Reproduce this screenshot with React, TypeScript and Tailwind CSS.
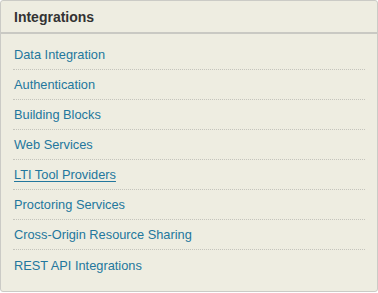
import React from "react";

const links = [
  "Data Integration",
  "Authentication",
  "Building Blocks",
  "Web Services",
  "LTI Tool Providers",
  "Proctoring Services",
  "Cross-Origin Resource Sharing",
  "REST API Integrations",
];

export default function App() {
  return (
    <div className="w-[378px] h-[293px] bg-white font-['Liberation_Sans',Arial,sans-serif]">
      <div className="h-[292px] border border-[#cbcbc6] rounded-[3px] bg-[#eeede1] flex flex-col">
        {/* Header */}
        <div className="h-[33px] border-b-2 border-[#c9c9c3] px-[13px] flex items-center">
          <h2 className="text-[14px] font-bold text-[#333333] leading-none pt-[1px]">Integrations</h2>
        </div>

        {/* Links */}
        <ul className="px-[12px] pt-[6px]">
          {links.map((label, i) => (
            <li
              key={label}
              className={
                i < links.length - 1
                  ? "h-[30px] border-b border-dotted border-[#c4c4bc] flex items-center px-[1px]"
                  : "h-[30px] flex items-center px-[1px]"
              }
            >
              <a
                href="#"
                className={
                  label === "LTI Tool Providers"
                    ? "text-[12.8px] text-[#23779d] underline underline-offset-[2px] leading-[15px]"
                    : "text-[12.8px] text-[#23779d] leading-[15px]"
                }
              >
                {label}
              </a>
            </li>
          ))}
        </ul>
      </div>
    </div>
  );
}
